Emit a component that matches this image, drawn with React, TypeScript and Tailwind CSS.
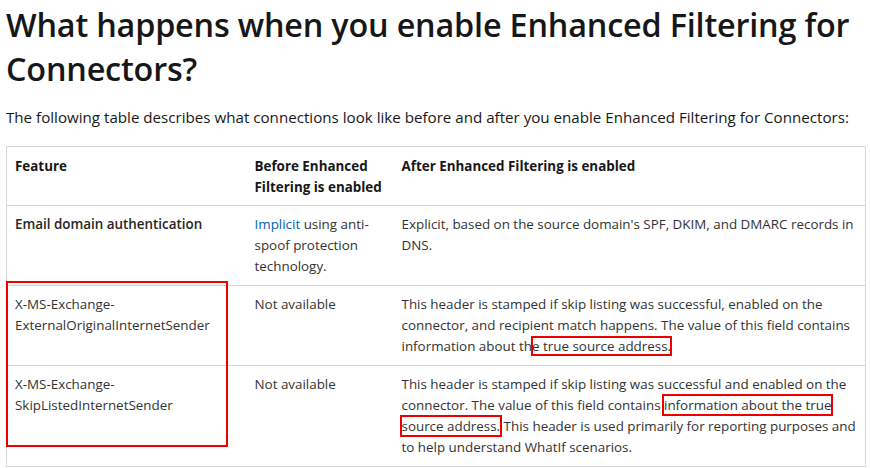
const rows = [
  {
    feature: "Email domain authentication",
    before: (
      <>
        <span className="text-[#0065b3]">Implicit</span> using anti-spoof protection technology.
      </>
    ),
    after: <>Explicit, based on the source domain's SPF, DKIM, and DMARC records in DNS.</>,
  },
  {
    feature: "X-MS-Exchange-ExternalOriginalInternetSender",
    before: "Not available",
    after: (
      <>
        This header is stamped if skip listing was successful, enabled on the connector, and recipient match happens. The
        value of this field contains information about th
        <span className="outline-2 outline-[#e00] -outline-offset-1">e true source address.</span>
      </>
    ),
  },
  {
    feature: "X-MS-Exchange-SkipListedInternetSender",
    before: "Not available",
    after: (
      <>
        This header is stamped if skip listing was successful and enabled on the connector. The value of this field
        contains <span className="outline-2 outline-[#e00]">information about the true source address.</span> This header
        is used primarily for reporting purposes and to help understand WhatIf scenarios.
      </>
    ),
  },
];

export default function App() {
  return (
    <div className="w-[870px] h-[468px] overflow-hidden bg-white px-[6px] pt-[2px] text-[#171717] font-['Open_Sans',sans-serif]">
      <h2 className="text-[32.4px] leading-[44px] font-semibold tracking-[-0.2px]">
        What happens when you enable Enhanced Filtering for Connectors?
      </h2>
      <p className="mt-[15px] text-[15.15px] leading-[24px]">
        The following table describes what connections look like before and after you enable Enhanced Filtering for
        Connectors:
      </p>
      <div className="relative mt-[17px] w-[860px]">
        <table className="w-full table-fixed border-collapse border border-[#d6d6d6] text-[13.4px] leading-[21px] text-[#333]">
          <colgroup>
            <col className="w-[240px]" />
            <col className="w-[147px]" />
            <col />
          </colgroup>
          <thead>
            <tr className="border-b border-[#d6d6d6] text-[#171717]">
              <th className="px-2 pt-[9px] pb-[7px] text-left align-top font-bold">Feature</th>
              <th className="px-2 pt-[9px] pb-[7px] text-left align-top font-bold">Before Enhanced Filtering is enabled</th>
              <th className="px-2 pt-[9px] pb-[7px] text-left align-top font-bold">After Enhanced Filtering is enabled</th>
            </tr>
          </thead>
          <tbody>
            {rows.map((r, i) => (
              <tr key={i} className="border-b border-[#d6d6d6]">
                <td className={"px-2 py-2 align-top " + (i === 0 ? "font-semibold text-[#262626]" : "")}>{r.feature}</td>
                <td className="px-2 py-2 align-top">{r.before}</td>
                <td className="px-2 py-2 align-top">{r.after}</td>
              </tr>
            ))}
          </tbody>
        </table>
        <div className="absolute left-0 top-[135px] w-[222px] h-[166px] border-2 border-[#e00] pointer-events-none" />
      </div>
    </div>
  );
}
